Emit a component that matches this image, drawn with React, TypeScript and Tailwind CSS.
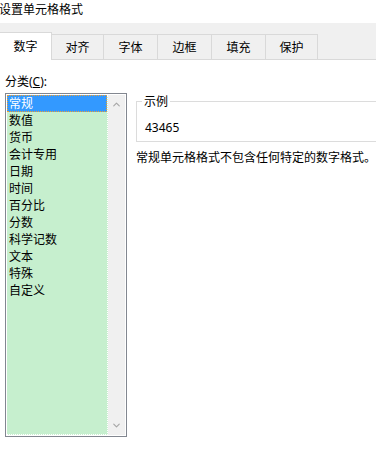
import { ChevronDown, ChevronUp } from "lucide-react";

// 设置单元格格式 —「数字」页

const TABS = [
  { label: "数字", w: "w-[52px]" },
  { label: "对齐", w: "w-[52px]" },
  { label: "字体", w: "w-[54px]" },
  { label: "边框", w: "w-[54px]" },
  { label: "填充", w: "w-[54px]" },
  { label: "保护", w: "w-[52px]" },
];

const CATEGORIES = [
  "常规",
  "数值",
  "货币",
  "会计专用",
  "日期",
  "时间",
  "百分比",
  "分数",
  "科学记数",
  "文本",
  "特殊",
  "自定义",
];

export default function App() {
  const active = 0;
  const selected = 0;

  return (
    <div className="relative h-[453px] w-[376px] overflow-hidden bg-white text-[12px] leading-[17px] text-black [font-family:'Noto_Sans','Noto_Sans_CJK_SC',sans-serif]">
      {/* 标题 */}
      <div className="ml-[-1px] h-[23px] pt-[1px]">设置单元格格式</div>

      {/* 标签页 */}
      <div className="flex h-[37px] items-end border-b border-[#d9d9d9] bg-[#f0f0f0]">
        {TABS.map((t, i) =>
          i === active ? (
            <div
              key={t.label}
              className={`${t.w} -mb-px flex h-[28px] items-center justify-center border-r border-t border-[#d9d9d9] bg-white`}
            >
              {t.label}
            </div>
          ) : (
            <div
              key={t.label}
              className={`${t.w} flex h-[25px] items-center justify-center border-r border-t border-[#d9d9d9] bg-[#f0f0f0] pt-[1px]`}
            >
              {t.label}
            </div>
          ),
        )}
      </div>

      <div className="flex">
        {/* 分类 */}
        <div className="pl-[5px]">
          <div className="pt-[13px]">
            分类(<span className="underline">C</span>):
          </div>
          <div className="mt-[3px] flex h-[344px] w-[122px] border border-[#828790] bg-white p-px">
            <div className="flex-1 border-b border-r border-dotted border-white bg-[#c6efce]">
              {CATEGORIES.map((c, i) => (
                <div
                  key={c}
                  className={`h-[17px] whitespace-nowrap ${
                    i === selected
                      ? "border border-dotted border-[#f0a030] bg-[#3399ff] pl-[1px] leading-[15px] text-white"
                      : "pl-[2px]"
                  }`}
                >
                  {c}
                </div>
              ))}
            </div>
            <div className="flex w-[17px] flex-col items-center justify-between bg-[#f0f0f0] py-[4px] text-[#a6a6a6]">
              <ChevronUp size={11} strokeWidth={2.5} />
              <ChevronDown size={11} strokeWidth={2.5} />
            </div>
          </div>
        </div>

        {/* 示例 */}
        <div className="ml-[9px] pt-[33px]">
          <fieldset className="w-[260px] border border-[#dcdcdc] px-[8px] pb-[5px] pt-[9px]">
            <legend className="ml-[-3px] px-[2px] leading-[17px]">示例</legend>
            <div>43465</div>
          </fieldset>
          <div className="mt-[7px] whitespace-nowrap">常规单元格格式不包含任何特定的数字格式。</div>
        </div>
      </div>
    </div>
  );
}
